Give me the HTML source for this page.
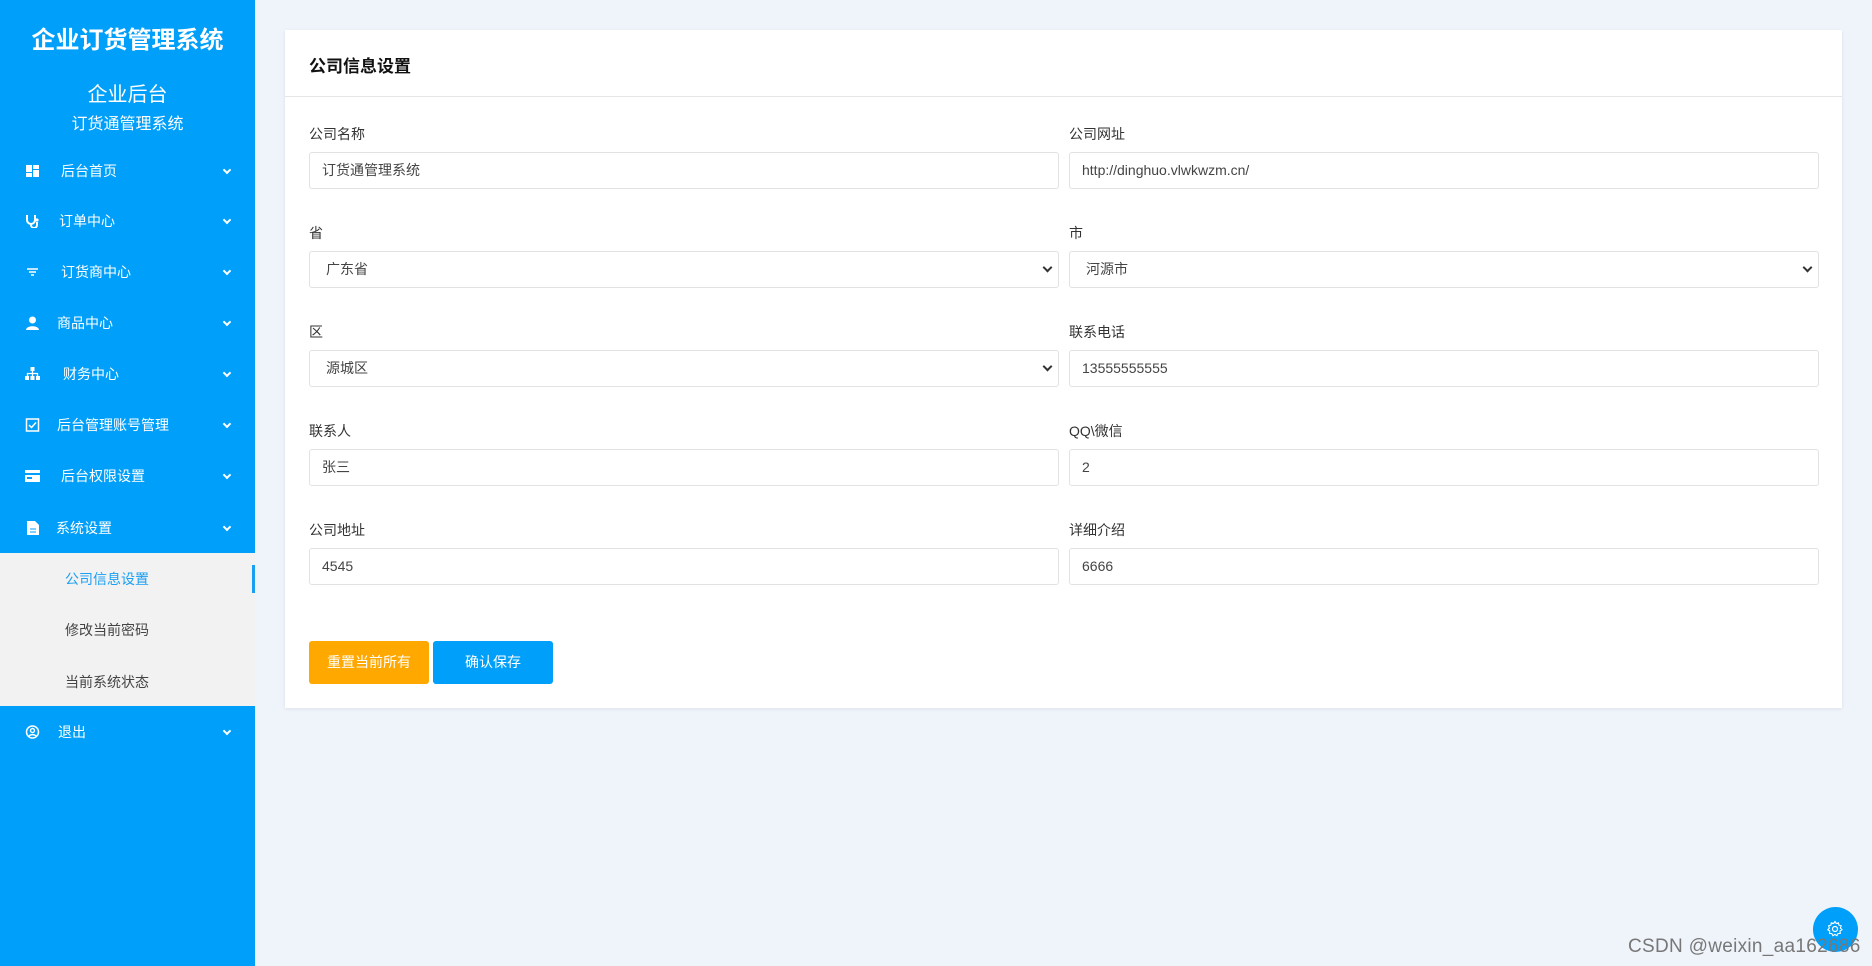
<!DOCTYPE html>
<html><head><meta charset="utf-8"><style>
*{margin:0;padding:0;box-sizing:border-box}
body{width:1872px;height:966px;background:#eff4fb;font-family:"Liberation Sans","Noto Sans CJK SC",sans-serif;position:relative;overflow:hidden}
.side{position:absolute;left:0;top:0;width:255px;height:966px;background:#009ffa;color:#fff}
.t1{position:absolute;top:20px;width:255px;text-align:center;font-size:24px;font-weight:bold}
.t2{position:absolute;top:78px;width:255px;text-align:center;font-size:20px}
.t3{position:absolute;top:110px;width:255px;text-align:center;font-size:16px}
.mi{position:absolute;left:0;width:255px;height:20px;font-size:14px;line-height:20px}
.mi .ic{position:absolute;left:25px;top:3px;width:15px;height:14px}
.mi .tx{position:absolute}
.mi .ch{position:absolute;left:224px;top:6px;width:6px;height:6px;border-right:2px solid #fff;border-bottom:2px solid #fff;transform:rotate(45deg)}
.sub{position:absolute;left:0;top:553px;width:255px;height:153px;background:#f2f2f2}
.sub div{position:absolute;left:65px;font-size:14px;color:#444}
.card{position:absolute;left:285px;top:30px;width:1557px;height:678px;background:#fff;box-shadow:0 1px 4px rgba(0,0,0,.08)}
.hd{height:67px;border-bottom:1px solid #e6e6e6;font-size:17px;font-weight:bold;padding:22px 24px;color:#111}
.lb{position:absolute;font-size:14px;color:#333}
.in{position:absolute;width:750px;height:37px;border:1px solid #e2e2e2;border-radius:3px;font-size:14px;color:#444;line-height:35px;padding-left:12px}
.sel{padding-left:16px}
.sel:after{content:"";position:absolute;right:7px;top:12px;width:5px;height:5px;border-right:2px solid #333;border-bottom:2px solid #333;transform:rotate(45deg)}
.btn{position:absolute;top:611px;height:43px;width:120px;border-radius:3px;color:#fff;font-size:14px;text-align:center;line-height:43px}
</style></head><body>
<div class="side">
<div class="t1">企业订货管理系统</div>
<div class="t2">企业后台</div>
<div class="t3">订货通管理系统</div>

<div class="mi" style="top:161px"><svg class="ic" viewBox="0 0 15 14"><rect x="1" y="1" width="6" height="7" fill="#fff"/><rect x="8" y="1" width="6" height="4" fill="#fff"/><rect x="1" y="9" width="6" height="4" fill="#fff"/><rect x="8" y="6" width="6" height="7" fill="#fff"/></svg><span class="tx" style="left:61px">后台首页</span><i class="ch"></i></div>
<div class="mi" style="top:211px"><svg class="ic" viewBox="0 0 15 14"><path d="M2 1v5a4 4 0 0 0 8 0V1M6 10v1a3 3 0 0 0 6 0V8" stroke="#fff" stroke-width="2" fill="none"/><circle cx="12" cy="6" r="1.6" fill="#fff"/></svg><span class="tx" style="left:59px">订单中心</span><i class="ch"></i></div>
<div class="mi" style="top:262px"><svg class="ic" viewBox="0 0 15 14"><path d="M2 4h11M4 7h7M6 10h3" stroke="#fff" stroke-width="1.5"/></svg><span class="tx" style="left:61px">订货商中心</span><i class="ch"></i></div>
<div class="mi" style="top:313px"><svg class="ic" viewBox="0 0 15 14"><circle cx="7.5" cy="4" r="3.5" fill="#fff"/><path d="M1 14c0-5 13-5 13 0z" fill="#fff"/></svg><span class="tx" style="left:57px">商品中心</span><i class="ch"></i></div>
<div class="mi" style="top:364px"><svg class="ic" viewBox="0 0 15 14"><rect x="5.5" y="0" width="4" height="4" fill="#fff"/><path d="M2.5 9V6.5h10V9M7.5 4v5" stroke="#fff" stroke-width="1.3" fill="none"/><rect x="0" y="9" width="4" height="4" fill="#fff"/><rect x="5.5" y="9" width="4" height="4" fill="#fff"/><rect x="11" y="9" width="4" height="4" fill="#fff"/></svg><span class="tx" style="left:63px">财务中心</span><i class="ch"></i></div>
<div class="mi" style="top:415px"><svg class="ic" viewBox="0 0 15 14"><rect x="1.5" y="1" width="12" height="12" stroke="#fff" stroke-width="1.5" fill="none"/><path d="M4 7l2.5 2.5L11 4.5" stroke="#fff" stroke-width="1.5" fill="none"/></svg><span class="tx" style="left:57px">后台管理账号管理</span><i class="ch"></i></div>
<div class="mi" style="top:466px"><svg class="ic" viewBox="0 0 15 14"><rect x="0" y="1" width="15" height="3" fill="#fff"/><rect x="0" y="6" width="15" height="7" fill="#fff"/><rect x="2" y="8" width="5" height="2" fill="#009ffa"/></svg><span class="tx" style="left:61px">后台权限设置</span><i class="ch"></i></div>
<div class="mi" style="top:518px"><svg class="ic" viewBox="0 0 15 14"><path d="M2 0h8l4 4v10H2z" fill="#fff"/><path d="M5 8h6M5 11h6" stroke="#009ffa" stroke-width="1"/></svg><span class="tx" style="left:56px">系统设置</span><i class="ch"></i></div>

<div class="sub">
<div style="top:16px;color:#1a9ff2">公司信息设置</div>
<span style="position:absolute;left:252px;top:12px;width:3px;height:28px;background:#1a9ff2"></span>
<div style="top:67px">修改当前密码</div>
<div style="top:119px">当前系统状态</div>
</div>
<div class="mi" style="top:722px"><svg class="ic" viewBox="0 0 15 14"><circle cx="7.5" cy="7" r="6" stroke="#fff" stroke-width="1.5" fill="none"/><circle cx="7.5" cy="5.5" r="2" stroke="#fff" stroke-width="1.4" fill="none"/><path d="M3.5 11.5c2-2.5 6-2.5 8 0" stroke="#fff" stroke-width="1.4" fill="none"/></svg><span class="tx" style="left:58px">退出</span><i class="ch"></i></div>
</div>

<div class="card">
<div class="hd">公司信息设置</div>
<div class="lb" style="left:24px;top:94px">公司名称</div>
<div class="in" style="left:24px;top:122px">订货通管理系统</div>
<div class="lb" style="left:784px;top:94px">公司网址</div>
<div class="in" style="left:784px;top:122px">http://dinghuo.vlwkwzm.cn/</div>

<div class="lb" style="left:24px;top:193px">省</div>
<div class="in sel" style="left:24px;top:221px">广东省</div>
<div class="lb" style="left:784px;top:193px">市</div>
<div class="in sel" style="left:784px;top:221px">河源市</div>

<div class="lb" style="left:24px;top:292px">区</div>
<div class="in sel" style="left:24px;top:320px">源城区</div>
<div class="lb" style="left:784px;top:292px">联系电话</div>
<div class="in" style="left:784px;top:320px">13555555555</div>

<div class="lb" style="left:24px;top:391px">联系人</div>
<div class="in" style="left:24px;top:419px">张三</div>
<div class="lb" style="left:784px;top:391px">QQ\微信</div>
<div class="in" style="left:784px;top:419px">2</div>

<div class="lb" style="left:24px;top:490px">公司地址</div>
<div class="in" style="left:24px;top:518px">4545</div>
<div class="lb" style="left:784px;top:490px">详细介绍</div>
<div class="in" style="left:784px;top:518px">6666</div>

<div class="btn" style="left:24px;background:#ffa800">重置当前所有</div>
<div class="btn" style="left:148px;background:#009ffa">确认保存</div>
</div>

<div style="position:absolute;left:1813px;top:907px;width:45px;height:45px;border-radius:50%;background:#009ffa"><svg viewBox="0 0 20 20" width="20" height="20" style="position:absolute;left:12px;top:12px"><circle cx="10" cy="10" r="2.5" stroke="#fff" fill="none" stroke-width="1.2"/><path d="M10 2.5l1.2 2 2.3-.7.4 2.3 2.3.7-.8 2.2 1.6 1.8-2 1.2.3 2.4-2.4.2-1 2.1-2-1.3-2 1.3-1-2.1-2.4-.2.3-2.4-2-1.2 1.6-1.8-.8-2.2 2.3-.7.4-2.3 2.3.7z" stroke="#fff" fill="none" stroke-width="1.1"/></svg></div>
<div style="position:absolute;left:1628px;top:936px;font-size:19px;color:#777;letter-spacing:.3px">CSDN @weixin_aa162686</div>
</body></html>
